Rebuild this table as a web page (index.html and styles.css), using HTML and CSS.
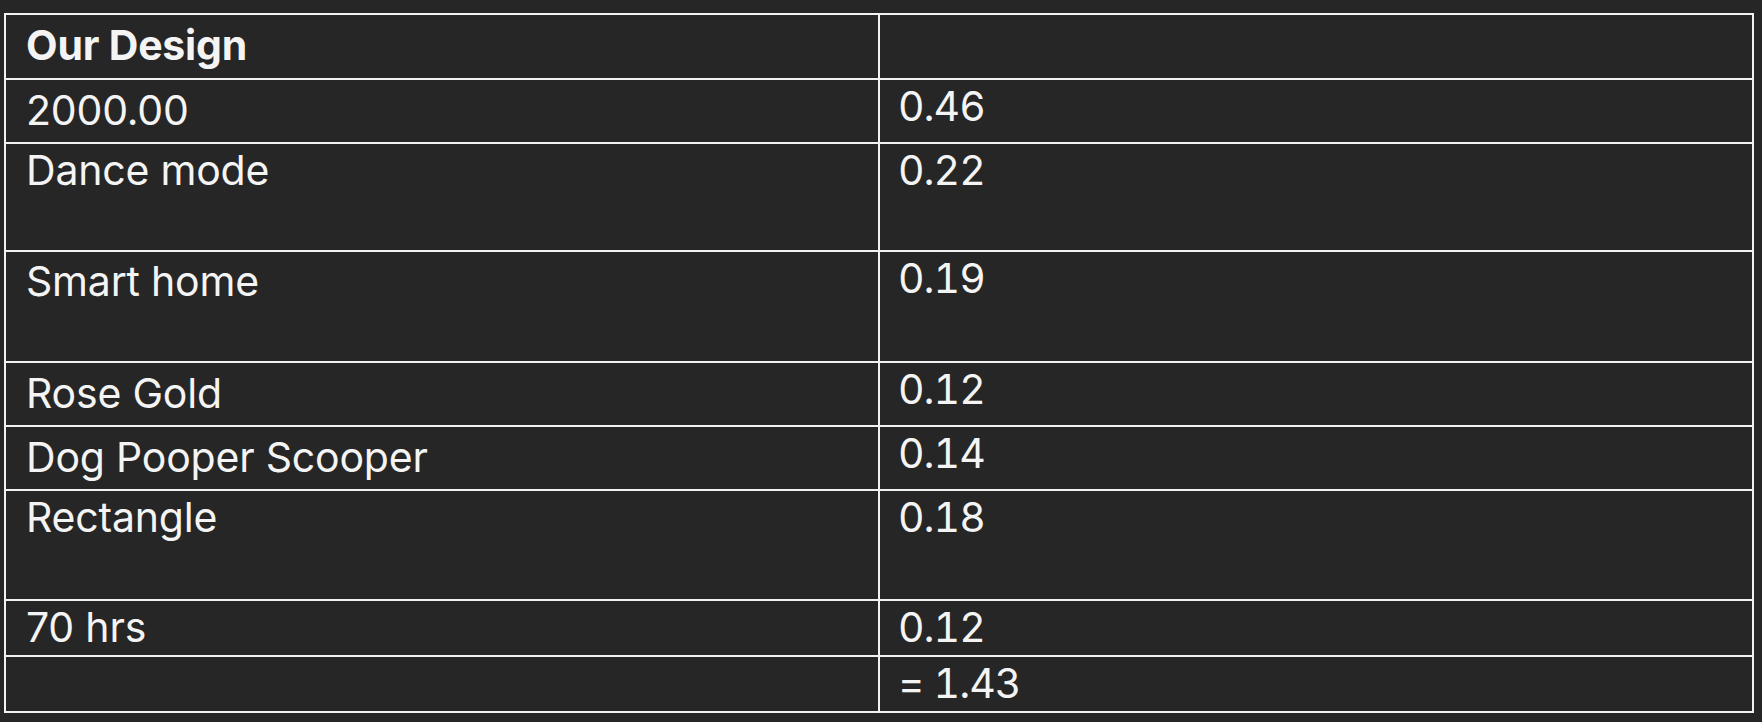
FILE: index.html
```html
<!DOCTYPE html>
<html lang="en">
<head>
<meta charset="utf-8">
<title>Our Design</title>
<link rel="stylesheet" href="styles.css">
</head>
<body>
<main class="page">
  <table class="grid">
    <tbody>
      <tr class="h65">
        <td class="cell key lo head">Our Design</td>
        <td class="cell val"></td>
      </tr>
      <tr class="h64">
        <td class="cell key lo">2000.00</td>
        <td class="cell val">0.46</td>
      </tr>
      <tr class="h108">
        <td class="cell key">Dance mode</td>
        <td class="cell val">0.22</td>
      </tr>
      <tr class="h111">
        <td class="cell key mid">Smart home</td>
        <td class="cell val">0.19</td>
      </tr>
      <tr class="h64">
        <td class="cell key lo">Rose Gold</td>
        <td class="cell val">0.12</td>
      </tr>
      <tr class="h64">
        <td class="cell key lo">Dog Pooper Scooper</td>
        <td class="cell val">0.14</td>
      </tr>
      <tr class="h110">
        <td class="cell key">Rectangle</td>
        <td class="cell val">0.18</td>
      </tr>
      <tr class="h56">
        <td class="cell key">70 hrs</td>
        <td class="cell val">0.12</td>
      </tr>
      <tr class="h56">
        <td class="cell key"></td>
        <td class="cell val">= 1.43</td>
      </tr>
    </tbody>
  </table>
</main>
</body>
</html>
```

FILE: styles.css
```css
html, body {
  margin: 0;
  padding: 0;
  background: #262626;
}

.page {
  padding: 13px 0 0 4px;
}

.grid {
  width: 1750px;
  table-layout: fixed;
  border-collapse: separate;
  border-spacing: 0;
  border-top: 2px solid #f2f2f2;
  border-left: 2px solid #f2f2f2;
  font-family: Inter, "Noto Sans", sans-serif;
  font-size: 41px;
  line-height: 50px;
  color: #f4f4f4;
}

.cell {
  box-sizing: border-box;
  width: 50%;
  vertical-align: top;
  padding: 1px 8px 0 18px;
  border-right: 2px solid #f2f2f2;
  border-bottom: 2px solid #f2f2f2;
  white-space: nowrap;
}

.cell.key {
  padding-left: 20px;
  padding-right: 6px;
  letter-spacing: -0.2px;
}

.cell.val {
  font-variant-numeric: tabular-nums;
  letter-spacing: -1px;
}

.cell.lo {
  padding-top: 5px;
}

.cell.mid {
  padding-top: 4px;
}

.head {
  font-weight: 700;
}

.h56 { height: 56px; }
.h64 { height: 64px; }
.h65 { height: 65px; }
.h108 { height: 108px; }
.h110 { height: 110px; }
.h111 { height: 111px; }
```
